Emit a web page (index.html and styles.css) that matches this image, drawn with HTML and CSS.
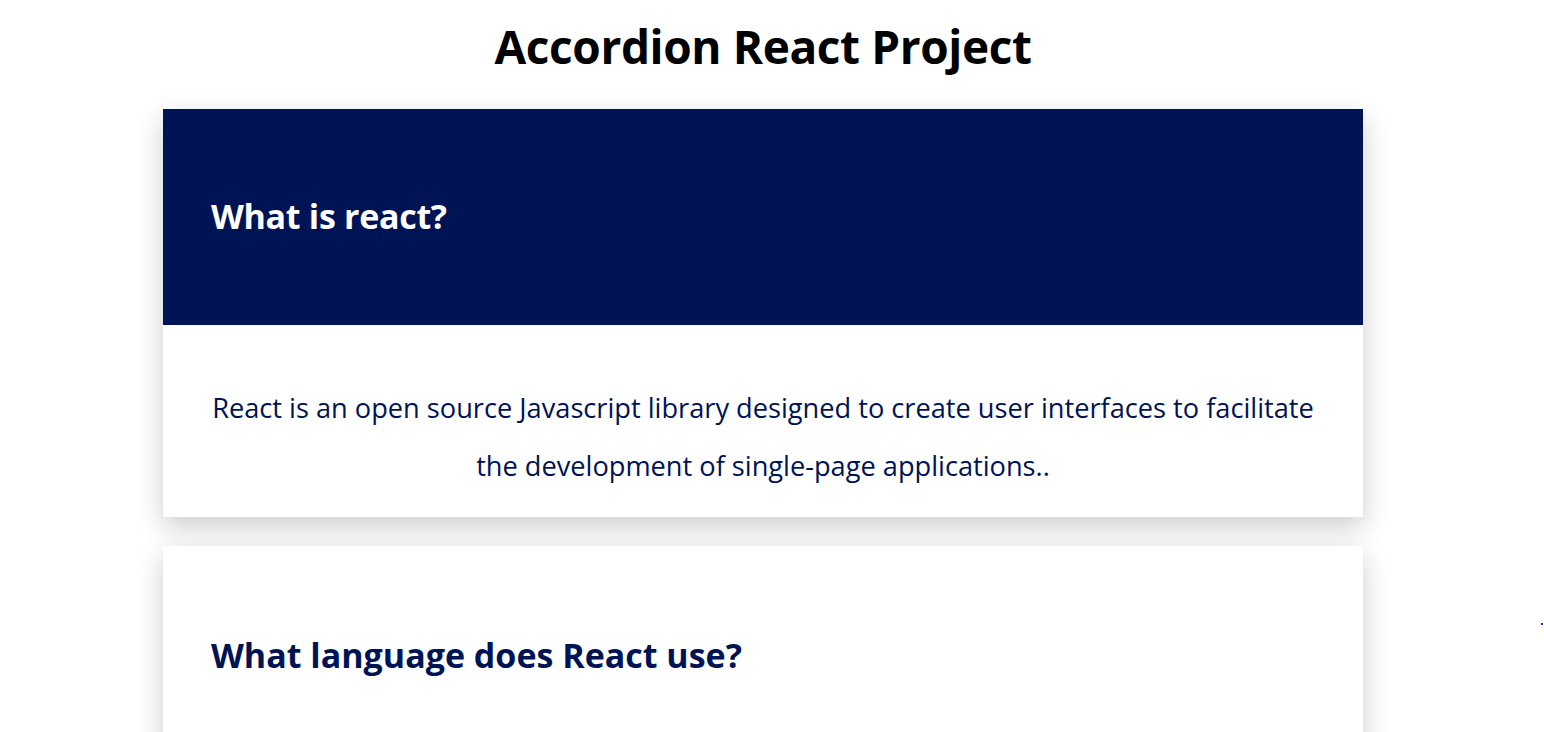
FILE: index.html
```html
<!DOCTYPE html>
<html lang="en">
<head>
<meta charset="utf-8">
<title>Accordion React Project</title>
<link rel="stylesheet" href="styles.css">
</head>
<body>
<main class="page">
  <h1 class="title">Accordion React Project</h1>
  <section class="accordion">
    <div class="item open">
      <div class="item-head"><h2 class="question">What is react?</h2></div>
      <div class="item-body">
        <p class="answer">React is an open source Javascript library designed to create user interfaces to facilitate the development of single-page applications..</p>
      </div>
    </div>
    <div class="item">
      <div class="item-head"><h2 class="question">What language does React use?</h2></div>
    </div>
  </section>
</main>
<span class="dot"></span>
</body>
</html>
```

FILE: styles.css
```css
html, body {
  margin: 0;
  padding: 0;
  background: #ffffff;
  overflow: hidden;
}
body {
  font-family: "Open Sans", "Noto Sans", sans-serif;
  height: 732px;
  position: relative;
}
.page {
  display: flex;
  flex-direction: column;
  align-items: center;
  padding-right: 18px;
}
.title {
  margin: 15px 0 32px;
  font-size: 46px;
  line-height: 62px;
  font-weight: 700;
  color: #000;
  letter-spacing: -0.4px;
}
.accordion {
  width: 1200px;
  display: flex;
  flex-direction: column;
  gap: 29px;
}
.item {
  background: #fff;
  box-shadow: 0 10px 26px rgba(0, 0, 0, 0.2);
}
.item-head {
  height: 216px;
  display: flex;
  align-items: center;
  padding: 0 48px;
  box-sizing: border-box;
}
.open .item-head {
  background: #001455;
}
.question {
  margin: 0 0 2px;
  font-size: 34px;
  font-weight: 700;
  color: #001455;
  letter-spacing: -0.3px;
}
.item .question {
  margin-top: 4px;
  letter-spacing: 0;
}
.open .question {
  color: #fff;
  margin-top: 0;
  letter-spacing: -0.3px;
}
.item-body {
  padding: 54px 48px 22px;
}
.answer {
  margin: 0;
  text-align: center;
  font-size: 27.2px;
  line-height: 58px;
  color: #001455;
}
.dot {
  position: absolute;
  left: 1541px;
  top: 623px;
  width: 2px;
  height: 2px;
  background: #2020ff;
}
```
